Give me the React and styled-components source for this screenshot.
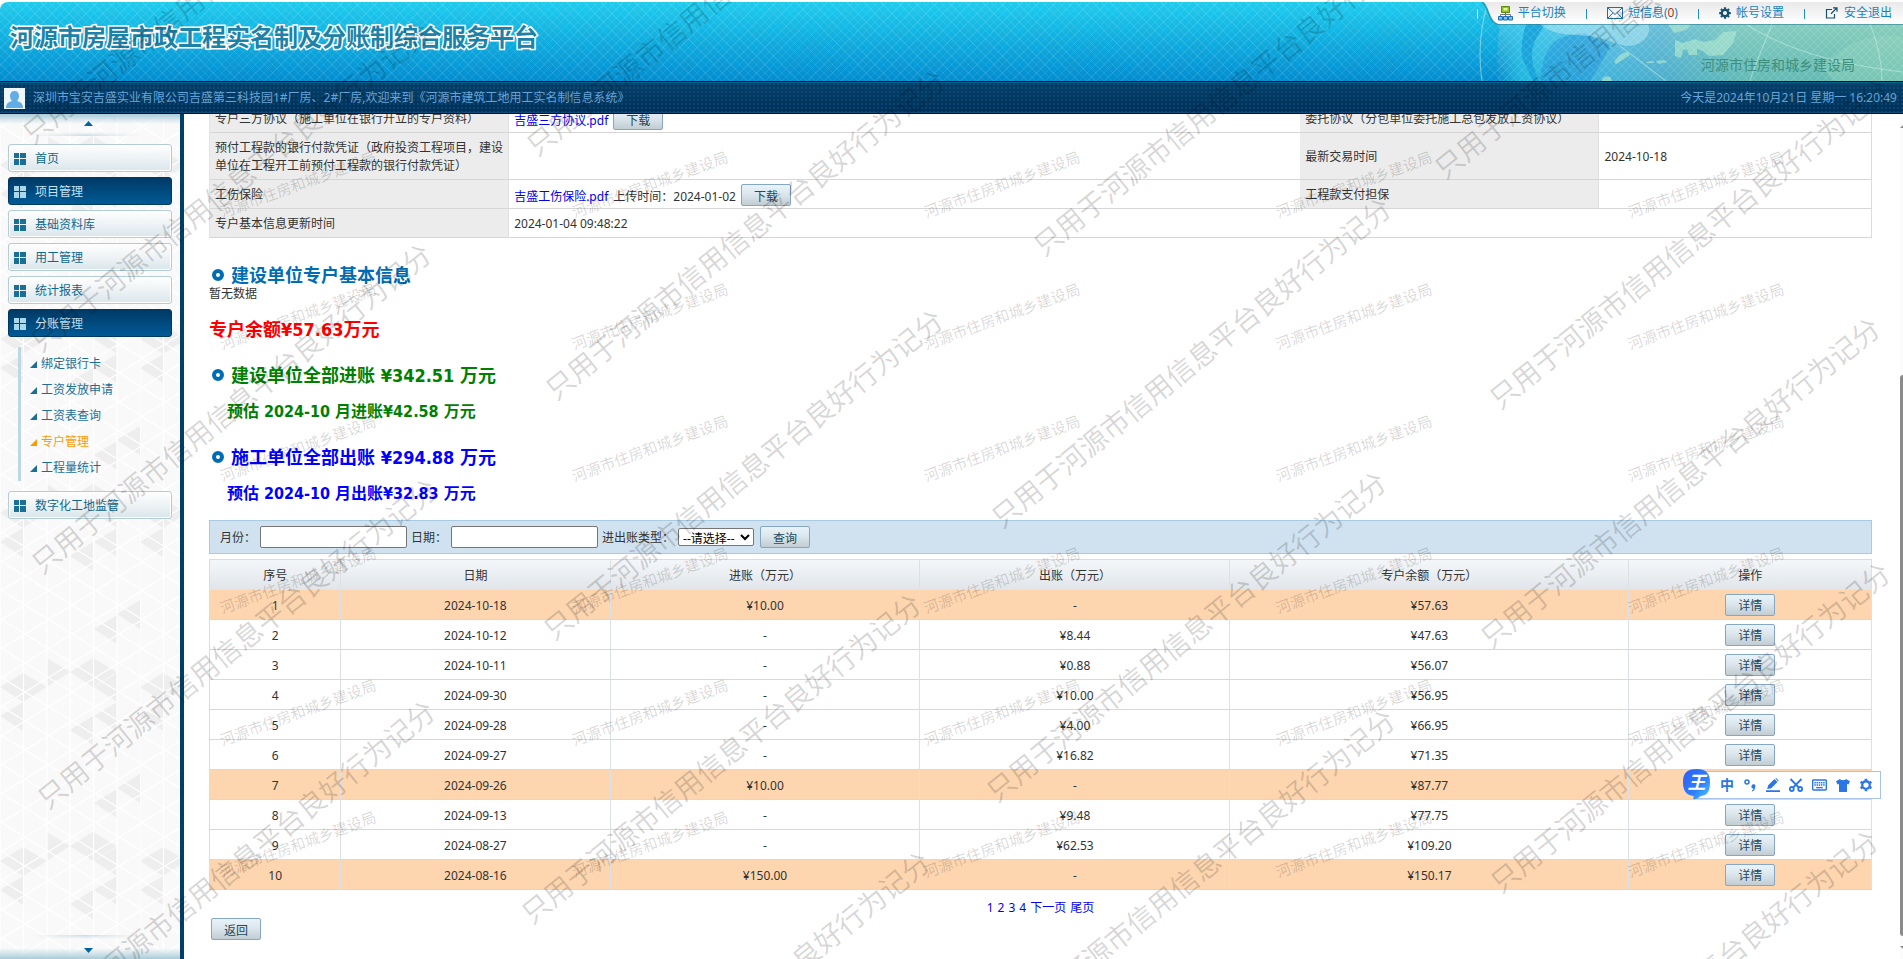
import React from "react";
import styled, { createGlobalStyle, css } from "styled-components";

const Global = createGlobalStyle`
  * { box-sizing: border-box; }
  body {
    margin: 0;
    background: #fff;
    color: #333;
    font: 12px/18px "Noto Sans", "Noto Sans CJK SC", sans-serif;
  }
  button, input, select { font: inherit; }
  a { text-decoration: none; }
`;

const Page = styled.div`
  position: relative;
  display: flex;
  flex-direction: column;
  min-height: 100vh;
  overflow: hidden;
`;

/* ---------- header ---------- */
const Header = styled.header`
  position: relative;
  display: flex;
  justify-content: space-between;
  height: 79px;
  margin-top: 2px;
  border-top-left-radius: 8px;
  overflow: hidden;
  background:
    repeating-linear-gradient(45deg, rgba(255, 255, 255, 0.09) 0 1px, transparent 1px 6px),
    repeating-linear-gradient(-45deg, rgba(255, 255, 255, 0.09) 0 1px, transparent 1px 6px),
    linear-gradient(#20ccee, #12b0e0 45%, #028dd0);
`;

const GlobeArt = styled.svg`
  position: absolute;
  top: 0;
  right: 0;
  width: 433px;
  height: 79px;
`;

const SiteTitle = styled.h1`
  position: relative;
  margin: 18px 0 0 10px;
  font-size: 24px;
  line-height: 34px;
  font-weight: 700;
  color: #1c82a8;
  -webkit-text-stroke: 3px #fff;
  paint-order: stroke fill;
`;

const HeaderSide = styled.div`
  position: relative;
  display: flex;
  flex-direction: column;
  align-items: flex-end;
`;

const TopNav = styled.nav`
  display: flex;
  align-items: center;
  height: 22px;
  padding-right: 11px;
  line-height: 22px;
`;

const TabShape = styled.svg`
  position: absolute;
  top: 0;
  right: 0;
  width: 424px;
  height: 24px;
`;

const NavLink = styled.a`
  position: relative;
  display: flex;
  align-items: center;
  gap: 5px;
  color: #1583c4;
  svg { display: block; }
`;

const Count = styled.span`
  color: #a3382a;
`;

const Divider = styled.span`
  position: relative;
  width: 1px;
  height: 10px;
  margin: 2px 20px 0;
  background: ${(p) => (p.$light ? "#d8f4fc" : "#1e90cf")};
`;

const Bureau = styled.div`
  margin: 31px 48px 0 0;
  font-size: 14px;
  line-height: 20px;
  color: #3f8f7c;
`;

const StatusBar = styled.div`
  display: flex;
  justify-content: space-between;
  align-items: center;
  height: 33px;
  padding: 1px 6px 0 4px;
  border-top: 1px solid #001a2e;
  border-bottom: 1px solid #000c18;
  box-shadow: inset 0 1px 0 #0a5f8c, inset 0 -1px 0 #0a4c78;
  background:
    radial-gradient(circle, rgba(20, 110, 150, 0.3) 0 1px, transparent 1px) 0 0 / 4px 4px,
    linear-gradient(#053f68, #00305a);
  color: #68a4d8;
`;

const Welcome = styled.div`
  display: flex;
  align-items: center;
  gap: 8px;
  svg { display: block; }
`;

/* ---------- frame ---------- */
const Frame = styled.div`
  display: flex;
  flex: 1;
`;

const Sidebar = styled.aside`
  position: relative;
  display: flex;
  flex-direction: column;
  width: 184px;
  flex: none;
  border-right: 4px solid #004068;
  background: #f9f9f9;
`;

const Pattern = styled.svg`
  position: absolute;
  inset: 0;
  width: 100%;
  height: 100%;
`;

const ScrollCap = styled.div`
  position: relative;
  display: flex;
  align-items: center;
  justify-content: center;
  height: ${(p) => (p.$bottom ? "24px" : "22px")};
  margin-top: ${(p) => (p.$bottom ? "auto" : "0")};
  padding: ${(p) => (p.$bottom ? "6px 4px 0 0" : "0 4px 4px 0")};
  background: ${(p) =>
    p.$bottom
      ? "linear-gradient(transparent 55%, #a9ccd9)"
      : "linear-gradient(#a9ccd9, transparent 45%)"};

  &::after {
    content: "";
    position: absolute;
    left: 30px;
    right: 40px;
    ${(p) => (p.$bottom ? "top: 0" : "bottom: 0")};
    height: 4px;
    background: linear-gradient(${(p) => (p.$bottom ? "0deg" : "180deg")}, transparent, rgba(150, 190, 205, 0.5));
    mask-image: linear-gradient(90deg, transparent, #000, transparent);
  }
`;

const MenuList = styled.nav`
  position: relative;
  display: flex;
  flex-direction: column;
  gap: 5px;
  padding: 8px 8px 0;
`;

const MenuItem = styled.a`
  display: flex;
  align-items: center;
  gap: 9px;
  height: 28px;
  padding: 1px 0 0 5px;
  border: 1px solid #b4ccd6;
  border-radius: 3px;
  box-shadow: inset 0 0 0 1px #fff;
  background: linear-gradient(rgba(255, 255, 255, 0.85), #eef3f5 50%, #d9e6eb);
  color: #0f6890;
  svg { display: block; fill: #1b6f96; }
  ${(p) =>
    p.$active &&
    css`
      border-color: #003a62;
      box-shadow: none;
      background: linear-gradient(#003a66, #005a96);
      color: #c4e2f2;
      svg { fill: #a9d8ec; }
    `}
`;

const SubMenu = styled.div`
  display: flex;
  flex-direction: column;
  margin: 5px 0 5px 10px;
  padding: 4px 0 0 9px;
  border-left: 3px solid #bcd8e2;
`;

const SubItem = styled.a`
  display: flex;
  align-items: center;
  gap: 4px;
  height: 26px;
  color: ${(p) => (p.$active ? "#ff9900" : "#1b6f96")};
  svg { display: block; fill: currentColor; }
`;

/* ---------- content ---------- */
const Main = styled.main`
  position: relative;
  flex: 1;
  min-width: 0;
  padding: 0 28px 19px 25px;
  overflow: hidden;
`;

const InfoTable = styled.table`
  width: 100%;
  margin-top: -10px;
  table-layout: fixed;
  border-spacing: 0;
  border-left: 1px solid #e4e4e4;
  th, td {
    height: 29px;
    padding: 2px 5px 0;
    text-align: left;
    font-weight: 400;
    border-bottom: 1px solid #d6d6d6;
  }
  th { background: #ececec; border-right: 1px solid #e0e0e0; }
  td:last-child { border-right: 1px solid #dcdcdc; }
  tr:nth-child(2) > * { height: 47px; }
`;

const FileLine = styled.div`
  display: flex;
  align-items: center;
  gap: 5px;
  height: 22px;
  a { color: #0000ee; }
  span, a { padding-top: 4px; }
`;

const Button = styled.button`
  width: 50px;
  height: 22px;
  padding: 3px 0 0;
  border: 1px solid #86a6c6;
  border-radius: 2px;
  background: linear-gradient(#e9f4fa, #dce7ed 45%, #c2cdd3);
  color: #22485c;
  line-height: 16px;
`;

const Heading = styled.h2`
  display: flex;
  align-items: center;
  gap: 7px;
  height: 20px;
  margin: ${(p) => p.$top || 26}px 0 0;
  padding-left: ${(p) => (p.$plain ? 0 : 3)}px;
  font: 700 18px/20px "DejaVu Sans Condensed", "DejaVu Sans", "Noto Sans CJK SC", sans-serif;
  color: ${(p) => p.$color};
`;

const Ring = styled.span`
  flex: none;
  width: 12px;
  height: 12px;
  margin-bottom: 2px;
  border: 4px solid #006cb4;
  border-radius: 50%;
`;

const Estimate = styled.p`
  margin: 16px 0 0;
  padding-left: 18px;
  font: 700 16px/20px "DejaVu Sans Condensed", "DejaVu Sans", "Noto Sans CJK SC", sans-serif;
  color: ${(p) => p.$color};
`;

const Empty = styled.div`
  line-height: 16px;
`;

const Filter = styled.form`
  display: flex;
  align-items: center;
  gap: 4px;
  height: 34px;
  margin: 16px 0 5px;
  padding: 0 10px;
  border: 1px solid #a8cbe2;
  background: #d0e2f0;
  label { padding-top: 2px; white-space: nowrap; }
  input {
    width: 147px;
    height: 22px;
    border: 1px solid #767676;
    border-radius: 2px;
    background: #fff;
  }
  select {
    width: 76px;
    height: 18px;
    padding: 0;
    border: 1px solid #767676;
    border-radius: 2px;
    background: #fff;
    color: #000;
  }
  button { margin-left: 2px; }
`;

const Ledger = styled.table`
  width: 100%;
  table-layout: fixed;
  border-spacing: 0;
  border-left: 1px solid #d9dde0;
  border-top: 1px solid #d9dde0;
  text-align: center;
  th {
    height: 30px;
    padding: 2px 0 0;
    font-weight: 400;
    background: linear-gradient(#f4f7fa, #e1e5e9);
    border-right: 1px solid #dce1e6;
  }
  td {
    height: 30px;
    padding: 2px 0 0;
    border-right: 1px solid #dce1e6;
    border-bottom: 1px solid #d6d9db;
  }
  td:last-child { padding: 0; }
`;

const Row = styled.tr`
  background: ${(p) => (p.$income ? "#fdd6b0" : "#fff")};
`;

const Pager = styled.nav`
  display: flex;
  justify-content: center;
  gap: 4px;
  margin-top: 9px;
  a { color: #0000ee; }
`;

const Footer = styled.div`
  padding: 1px 2px 0;
`;

const ScrollTrack = styled.div`
  display: grid;
  grid-template-rows: 14px 247fr 561fr 23px;
  width: 3px;
  flex: none;
  background: #fcfcfc;
`;

const Thumb = styled.div`
  grid-row: 3;
  background: #8b8b8b;
  border-radius: 3px 0 0 3px;
`;

const TrackArrow = styled.div`
  grid-row: ${(p) => p.$row};
  align-self: ${(p) => (p.$row === 1 ? "end" : "center")};
  width: 3px;
  height: 3px;
  background: #8b8b8b;
  clip-path: ${(p) =>
    p.$row === 1 ? "polygon(0 100%, 100% 0, 100% 100%)" : "polygon(0 0, 100% 0, 100% 100%)"};
`;

/* ---------- overlays ---------- */
const Marks = styled.div`
  position: absolute;
  inset: 0;
  pointer-events: none;
  color: rgba(0, 0, 0, 0.16);
  white-space: nowrap;
`;

const SmallMark = styled.span`
  position: absolute;
  left: ${(p) => p.$x}px;
  top: ${(p) => p.$y}px;
  font-size: 15px;
  line-height: 16px;
  transform-origin: 0 100%;
  transform: rotate(-20deg);
`;

const LargeMark = styled.span`
  position: absolute;
  left: ${(p) => p.$x - 14}px;
  top: ${(p) => p.$y - 14}px;
  font-size: 28px;
  line-height: 28px;
  transform-origin: 14px 14px;
  transform: rotate(-39deg);
`;

const ImeBar = styled.div`
  position: absolute;
  right: 22px;
  top: 771px;
  display: flex;
  align-items: center;
  gap: 9px;
  height: 28px;
  padding: 0 7px 0 26px;
  border: 1px solid #a6c3f2;
  background: #fff;
  color: #2b76e5;
  svg { display: block; }
`;

const ImeBadge = styled.span`
  position: absolute;
  left: -11px;
  top: -3px;
  width: 27px;
  height: 31px;
  svg { position: absolute; inset: 0; }
  b {
    position: absolute;
    inset: 0;
    color: #fff;
    font-size: 18px;
    line-height: 26px;
    font-style: italic;
    text-align: center;
  }
`;

const ImeMode = styled.b`
  width: 14px;
  font-size: 14px;
  line-height: 20px;
`;

/* ---------- data ---------- */
const menuTop = [
  ["首页", false],
  ["项目管理", true],
  ["基础资料库", false],
  ["用工管理", false],
  ["统计报表", false],
  ["分账管理", true],
];
const subMenu = ["绑定银行卡", "工资发放申请", "工资表查询", "专户管理", "工程量统计"];

const records = [
  ["2024-10-18", "¥10.00", "-", "¥57.63"],
  ["2024-10-12", "-", "¥8.44", "¥47.63"],
  ["2024-10-11", "-", "¥0.88", "¥56.07"],
  ["2024-09-30", "-", "¥10.00", "¥56.95"],
  ["2024-09-28", "-", "¥4.00", "¥66.95"],
  ["2024-09-27", "-", "¥16.82", "¥71.35"],
  ["2024-09-26", "¥10.00", "-", "¥87.77"],
  ["2024-09-13", "-", "¥9.48", "¥77.75"],
  ["2024-08-27", "-", "¥62.53", "¥109.20"],
  ["2024-08-16", "¥150.00", "-", "¥150.17"],
];

const smallColumns = [39, 391, 743, 1095, 1447];
const smallRows = [90, 222, 354, 486, 618, 750];

const largeMarks = [
  [37, 128], [45, 336], [46, 558], [52, 793], [50, 1015],
  [541, 140], [560, 384], [558, 624], [536, 908], [545, 1166],
  [1048, 240], [1006, 512], [1001, 786], [1010, 1024],
  [1449, 163], [1504, 393], [1495, 632], [1505, 877], [1493, 1145],
];

/* ---------- drawings ---------- */
const GridIcon = () => (
  <svg width="12" height="12" viewBox="0 0 12 12">
    <path d="M0 0h5v5H0zM6 0h6v5H6zM0 6h5v6H0zM6 6h6v6H6z" />
  </svg>
);

const Corner = () => (
  <svg width="7" height="7" viewBox="0 0 7 7"><path d="M7 0v7H0z" /></svg>
);

const UserIcon = () => (
  <svg width="21" height="21" viewBox="0 0 21 21">
    <path d="M0 0h21v21H0z" fill="#eef7fd" />
    <path d="M10.500 3c3 0 4.500 2 4.500 5s-2 6-4.500 6S6 11 6 8s1.500-5 4.500-5z" fill="#62aee4" />
    <path d="M2 20c0-5 3-6 6-7h5c3 1 6 2 6 7z" fill="#62aee4" />
  </svg>
);

const NetworkIcon = () => (
  <svg width="15" height="15" viewBox="0 0 15 15">
    <path d="M3.500.5h8v6h-8z" fill="#8fc31f" stroke="#5d8a12" />
    <path d="M5.500 2h4v2.500h-4z" fill="#e2f79a" />
    <path d="M7.500 7v3M2.500 10.500v-2h10v2" fill="none" stroke="#777" />
    <path d="M.5 10.500h4v3.500h-4zM5.500 10.500h4v3.500h-4zM10.500 10.500h4v3.500h-4z" fill="#7cc0ee" stroke="#1f6fb2" />
  </svg>
);

const MailIcon = () => (
  <svg width="16" height="12" viewBox="0 0 16 12" fill="none" stroke="#1f6fa5">
    <path d="M.5.5h15v11H.5zM.5.5L8 7.500 15.500.5M.5 11.500L6 5.800M15.500 11.500L10 5.800" />
  </svg>
);

const GearIcon = ({ size, color, hole }) => (
  <svg width={size} height={size} viewBox="0 0 16 16" fill="none" stroke={color}>
    <circle cx="8" cy="8" r="4.300" strokeWidth={hole ? 2.600 : 3} />
    <path
      strokeWidth="3"
      d={
        hole
          ? "M8 .8v2M8 13.200v2M1.800 4.400l1.700 1M12.500 10.600l1.700 1M14.200 4.400l-1.700 1M3.500 10.600l-1.700 1"
          : "M8 .3v2.500M8 13.200v2.500M.3 8h2.500M13.200 8h2.500M2.600 2.600l1.700 1.700M11.700 11.700l1.700 1.700M13.400 2.600l-1.700 1.700M4.300 11.700l-1.700 1.700"
      }
    />
  </svg>
);

const ExitIcon = () => (
  <svg width="14" height="12" viewBox="0 0 14 12" fill="none" stroke="#15506e" strokeWidth="1.200">
    <path d="M7 2.500H1.500v8.500h8V7" />
    <path d="M8 .8h4v4M12 .8L6 6.700" />
  </svg>
);

const Globe = () => (
  <GlobeArt viewBox="0 0 433 79" aria-hidden="true">
    <defs>
      <linearGradient id="sea" x1="0" x2="1" y1="0" y2="0">
        <stop offset="0" stopColor="#1ec0ea" stopOpacity="0" />
        <stop offset="0.060" stopColor="#22c4ec" />
        <stop offset="0.250" stopColor="#4cbfe6" />
        <stop offset="0.400" stopColor="#58b8d4" />
        <stop offset="0.600" stopColor="#76c8b8" />
        <stop offset="1" stopColor="#7ccab0" />
      </linearGradient>
      <linearGradient id="shade" x1="0" x2="0" y1="0" y2="1">
        <stop offset="0" stopColor="#fff" stopOpacity="0.200" />
        <stop offset="1" stopColor="#1183b0" stopOpacity="0.200" />
      </linearGradient>
      <pattern id="mesh" width="8" height="8" patternUnits="userSpaceOnUse">
        <path d="M0 0l8 8M8 0L0 8" stroke="#fff" strokeOpacity="0.120" />
      </pattern>
    </defs>
    <path d="M36 0C28 20 26 50 28 79H433V0z" fill="url(#sea)" />
    <path d="M36 0C28 20 26 50 28 79H433V0z" fill="url(#shade)" />
    <path d="M56 22c-4 14-6 24-3 36l10 21h6c-8-18-10-30-2-44l8-13z" fill="#0f9ad6" opacity="0.700" />
    <path d="M70 79c4-36 14-46 44-48l26 12c-6 16-14 26-20 36z" fill="#1a8ed8" opacity="0.450" />
    <path d="M70 22h108c4 10-4 20-18 22-14 0-22-8-40-10-20-2-36 0-50-12z" fill="#c4f0f6" opacity="0.450" />
    <path d="M144 60c4-6 8-10 14-10l2 3-6 4-8 5zM176 60l8-1v2h-8zM186 59l8-1 3 2-8 2zM132 79c0-4 4-6 8-4l2 4zM205 38l8 3 12-4 8 3 12-2 8-8 14-1-4 12-10 12-14 1-6-5-6-2v6h-8l-2-6-4 1-2 8-6-2zM198 22h24l-6 6-12 3z" fill="#a9e4cf" opacity="0.700" />
    <path d="M350 62c20-8 24-24 60-28 10-1 18 0 23 2v43h-70z" fill="#9adabf" opacity="0.350" />
    <path d="M18 0C10 26 8 52 12 79M280 79c8-26 16-40 22-57M276 22c40 26 90 40 157 48M400 22c8 20 12 36 12 57M150 44l46 35" fill="none" stroke="#c9f0e6" strokeOpacity="0.500" strokeWidth="1.200" />
    <path d="M36 0C28 20 26 50 28 79H433V0z" fill="url(#mesh)" />
  </GlobeArt>
);

/* kind 0: left-pointing half, 1: whole diamond, 2: right-pointing half */
const dark = [
  [0, 29, 1], [94, 29, 0], [47, 0, 2], [70, 14, 1], [0, 58, 0],
  [94, 58, 0], [70, 72, 0], [117, 130, 1], [94, 145, 0],
];

const Triangles = () => (
  <Pattern aria-hidden="true">
    <defs>
      <pattern id="tri" width="140" height="174" y="22" patternUnits="userSpaceOnUse">
        {dark.map(([x, y, kind], i) => (
          <path
            key={i}
            d={kind === 1 ? `M${x} ${y}l23 -14 24 14 -24 15z` : kind === 0 ? `M${x} ${y}l23 -14v29z` : `M${x} ${y}v29l23 -15z`}
            fill="#eeeeee"
          />
        ))}
        <path
          d={Array.from({ length: 14 }, (_, i) => `M-4 ${i * 29 - 100}l152 94M-4 ${i * 29 - 6}l152 -94`).join("") +
            "M0 0v174M23.500 0v174M47 0v174M70 0v174M93.500 0v174M117 0v174"}
          fill="none"
          stroke="#fff"
          strokeWidth="1.200"
        />
      </pattern>
    </defs>
    <rect width="100%" height="100%" fill="url(#tri)" />
  </Pattern>
);

const Arrow = ({ down }) => (
  <svg width="9" height="5" viewBox="0 0 9 5">
    <path d={down ? "M0 0h9L4.500 5z" : "M0 5h9L4.500 0z"} fill="#0060a0" />
  </svg>
);

export default function App() {
  return (
    <Page>
      <Global />
      <Header>
        <Globe />
        <SiteTitle>河源市房屋市政工程实名制及分账制综合服务平台</SiteTitle>
        <HeaderSide>
          <TabShape viewBox="0 0 424 24" aria-hidden="true">
            <defs>
              <linearGradient id="tab" x1="0" x2="0" y1="0" y2="1">
                <stop offset="0" stopColor="#e9e9e9" />
                <stop offset="1" stopColor="#ffffff" />
              </linearGradient>
            </defs>
            <path d="M3 0c6 2 6 20 16 22h405" fill="none" stroke="#2b7f92" strokeOpacity="0.600" strokeWidth="2" />
            <path d="M4 0c6 2 6 20 16 22h404V0z" fill="url(#tab)" />
          </TabShape>
          <TopNav>
            <Divider $light />
            <NavLink href="#switch"><NetworkIcon />平台切换</NavLink>
            <Divider />
            <NavLink href="#mail"><MailIcon /><span>短信息(<Count>0</Count>)</span></NavLink>
            <Divider />
            <NavLink href="#account"><GearIcon size={12} color="#15506e" />帐号设置</NavLink>
            <Divider />
            <NavLink href="#exit"><ExitIcon />安全退出</NavLink>
          </TopNav>
          <Bureau>河源市住房和城乡建设局</Bureau>
        </HeaderSide>
      </Header>

      <StatusBar>
        <Welcome>
          <UserIcon />
          <span>深圳市宝安吉盛实业有限公司吉盛第三科技园1#厂房、2#厂房,欢迎来到《河源市建筑工地用工实名制信息系统》</span>
        </Welcome>
        <span>今天是2024年10月21日 星期一 16:20:49</span>
      </StatusBar>

      <Frame>
        <Sidebar>
          <Triangles />
          <ScrollCap><Arrow /></ScrollCap>
          <MenuList>
            {menuTop.map(([label, active]) => (
              <MenuItem key={label} href="#menu" $active={active}><GridIcon />{label}</MenuItem>
            ))}
            <SubMenu>
              {subMenu.map((label) => (
                <SubItem key={label} href="#sub" $active={label === "专户管理"}><Corner />{label}</SubItem>
              ))}
            </SubMenu>
            <MenuItem href="#menu"><GridIcon />数字化工地监管</MenuItem>
          </MenuList>
          <ScrollCap $bottom><Arrow down /></ScrollCap>
        </Sidebar>

        <Main>
          <InfoTable>
            <colgroup>
              <col style={{ width: "18%" }} />
              <col />
              <col style={{ width: "18%" }} />
              <col style={{ width: "16.4%" }} />
            </colgroup>
            <tbody>
              <tr>
                <th>专户三方协议（施工单位在银行开立的专户资料）</th>
                <td><FileLine><a href="#file">吉盛三方协议.pdf</a><Button type="button">下载</Button></FileLine></td>
                <th>委托协议（分包单位委托施工总包发放工资协议）</th>
                <td />
              </tr>
              <tr>
                <th>预付工程款的银行付款凭证（政府投资工程项目，建设单位在工程开工前预付工程款的银行付款凭证）</th>
                <td />
                <th>最新交易时间</th>
                <td>2024-10-18</td>
              </tr>
              <tr>
                <th>工伤保险</th>
                <td>
                  <FileLine>
                    <a href="#file">吉盛工伤保险.pdf</a>
                    <span>上传时间：2024-01-02</span>
                    <Button type="button">下载</Button>
                  </FileLine>
                </td>
                <th>工程款支付担保</th>
                <td />
              </tr>
              <tr>
                <th>专户基本信息更新时间</th>
                <td colSpan={3}>2024-01-04 09:48:22</td>
              </tr>
            </tbody>
          </InfoTable>

          <Heading $color="#006cb4" $top={28}><Ring />建设单位专户基本信息</Heading>
          <Empty>暂无数据</Empty>
          <Heading $color="#ff0000" $top={18} $plain>专户余额¥57.63万元</Heading>
          <Heading $color="#008000"><Ring />建设单位全部进账 ¥342.51 万元</Heading>
          <Estimate $color="#008000">预估 2024-10 月进账¥42.58 万元</Estimate>
          <Heading $color="#0000ff"><Ring />施工单位全部出账 ¥294.88 万元</Heading>
          <Estimate $color="#0000ff">预估 2024-10 月出账¥32.83 万元</Estimate>

          <Filter>
            <label htmlFor="month">月份：</label>
            <input id="month" type="text" />
            <label htmlFor="date">日期：</label>
            <input id="date" type="text" />
            <label htmlFor="kind">进出账类型：</label>
            <select id="kind"><option>--请选择--</option></select>
            <Button type="button">查询</Button>
          </Filter>

          <Ledger>
            <colgroup>
              <col style={{ width: "7.9%" }} />
              <col style={{ width: "16.2%" }} />
              <col style={{ width: "18.65%" }} />
              <col style={{ width: "18.65%" }} />
              <col style={{ width: "24%" }} />
              <col />
            </colgroup>
            <thead>
              <tr>
                <th>序号</th><th>日期</th><th>进账（万元）</th><th>出账（万元）</th><th>专户余额（万元）</th><th>操作</th>
              </tr>
            </thead>
            <tbody>
              {records.map((r, i) => (
                <Row key={r[0]} $income={r[1] !== "-"}>
                  <td>{i + 1}</td>
                  {r.map((v, j) => <td key={j}>{v}</td>)}
                  <td><Button type="button">详情</Button></td>
                </Row>
              ))}
            </tbody>
          </Ledger>

          <Pager>
            {["1", "2", "3", "4", "下一页", "尾页"].map((t) => <a key={t} href="#page">{t}</a>)}
          </Pager>
          <Footer><Button type="button">返回</Button></Footer>

          <Marks aria-hidden="true">
            {smallRows.map((y) =>
              smallColumns.map((x) => <SmallMark key={`${x}-${y}`} $x={x} $y={y}>河源市住房和城乡建设局</SmallMark>)
            )}
          </Marks>
        </Main>
        <ScrollTrack>
          <TrackArrow $row={1} />
          <Thumb />
          <TrackArrow $row={4} />
        </ScrollTrack>
      </Frame>

      <Marks aria-hidden="true">
        {largeMarks.map(([x, y]) => (
          <LargeMark key={`${x}-${y}`} $x={x} $y={y}>只用于河源市信用信息平台良好行为记分</LargeMark>
        ))}
      </Marks>

      <ImeBar>
        <ImeBadge>
          <svg width="27" height="31" viewBox="0 0 27 31">
            <defs>
              <linearGradient id="ime" x1="0" x2="1" y1="0" y2="1">
                <stop offset="0" stopColor="#2f5cf6" />
                <stop offset="0.600" stopColor="#2f80fb" />
                <stop offset="1" stopColor="#48d0ff" />
              </linearGradient>
            </defs>
            <path d="M13.500 0C23 0 27 4 27 13s-2 13-9 14c-2 1-4 4-8 3 1-1 1-2 1-3C3 26 0 22 0 13S4 0 13.500 0z" fill="url(#ime)" />
          </svg>
          <b>王</b>
        </ImeBadge>
        <ImeMode>中</ImeMode>
        <svg width="14" height="14" viewBox="0 0 14 14">
          <circle cx="4" cy="4" r="2" fill="none" stroke="#2b76e5" strokeWidth="1.500" />
          <path d="M8.500 8a2 2 0 1 1 3.500 1.500c0 2-1 3.500-3 4v-1c1-.5 1.300-1 1.300-2A2 2 0 0 1 8.500 8z" fill="#2b76e5" />
        </svg>
        <svg width="14" height="14" viewBox="0 0 14 14" fill="#2b76e5">
          <path d="M0 12.200h14V14H0zM1.200 11l1-3.800L8.500.9l3 3-6.300 6.300zM9.300.3l.8-.3 2.700 2.700-.8.7z" />
        </svg>
        <svg width="14" height="14" viewBox="0 0 14 14" fill="none" stroke="#2b76e5" strokeWidth="1.800">
          <circle cx="2.800" cy="11" r="2" />
          <circle cx="11.200" cy="11" r="2" />
          <path d="M1.500 1l8.300 8.500M12.500 1L4.200 9.500" />
        </svg>
        <svg width="15" height="12" viewBox="0 0 16 12">
          <rect x="0.700" y="0.700" width="14.600" height="10.600" rx="1" fill="none" stroke="#2b76e5" strokeWidth="1.500" />
          <path d="M2.500 3.500h11M2.500 6h11" stroke="#2b76e5" strokeWidth="1.600" strokeDasharray="1.600 0.750" />
          <path d="M4.500 8.800h7" stroke="#2b76e5" strokeWidth="1.500" />
        </svg>
        <svg width="14" height="13" viewBox="0 0 14 13" fill="#2b76e5">
          <path d="M4 0c1 1.600 5 1.600 6 0l4 2.200-1.500 3.300-1.500-.5v8H3V5l-1.500.5L0 2.200z" />
        </svg>
        <GearIcon size={14} color="#2b76e5" hole />
      </ImeBar>
    </Page>
  );
}
